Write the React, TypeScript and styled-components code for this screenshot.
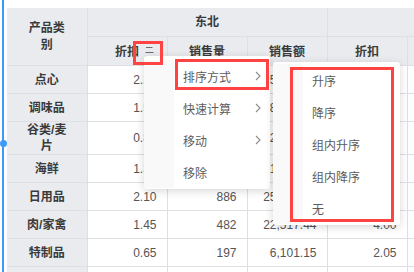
import React from "react";
import styled, { createGlobalStyle } from "styled-components";

const GlobalStyle = createGlobalStyle`
  html, body { margin: 0; padding: 0; background: #fff; }
  body { font-family: "Liberation Sans", "Noto Sans CJK SC", sans-serif; }
`;

const Page = styled.div`
  position: relative;
  display: flex;
  width: 414px;
  height: 272px;
  overflow: hidden;
  background: #fff;
`;

const Handle = styled.div`
  position: relative;
  flex: none;
  width: 7px;
  &::before {
    content: "";
    position: absolute;
    left: 2px;
    top: 0;
    bottom: 0;
    width: 2px;
    background: #3d9bf6;
  }
`;

const HandleDot = styled.span`
  position: absolute;
  left: 0;
  top: 140px;
  width: 7px;
  height: 7px;
  border-radius: 50%;
  background: #3d9bf6;
`;

const TableArea = styled.div`
  flex: 1;
  padding-top: 8px;
  overflow: hidden;
`;

const Table = styled.table`
  border-collapse: collapse;
  table-layout: fixed;
  width: 480px;
  font-size: 12px;
  color: #333;
`;

const Col = styled.col`
  width: 80px;
`;

const HeadCell = styled.th`
  height: 28px;
  padding: 0 6px;
  background: #e9ebee;
  border: 1px solid #dcdfe3;
  border-top: none;
  font-weight: 700;
  color: #3a3a3a;
  text-align: center;
  line-height: 16px;
  &:first-child { border-left: none; }
`;

const CornerCell = styled(HeadCell)`
  padding: 0 18px;
  line-height: 17px;
`;

const HeadLabel = styled.span`
  position: relative;
  display: inline-block;
  top: 1px;
`;

const SortIcon = styled.svg`
  position: absolute;
  left: calc(100% + 6px);
  top: 2px;
`;

const LabelCell = styled.td`
  height: 27px;
  padding: 0 18px;
  background: #e9ebee;
  border: 1px solid #dcdfe3;
  border-left: none;
  font-weight: 700;
  color: #3a3a3a;
  text-align: center;
  line-height: 16px;
`;

const NumCell = styled.td`
  height: 27px;
  padding: 0 10px;
  background: #fff;
  border: 1px solid #dcdfe3;
  color: #555;
  text-align: right;
  white-space: nowrap;
`;

const Menu = styled.div<{ $left: number; $top: number; $width: number; $padTop: number }>`
  position: absolute;
  left: ${(p) => p.$left}px;
  top: ${(p) => p.$top}px;
  width: ${(p) => p.$width}px;
  padding: ${(p) => p.$padTop}px 0 1px;
  background: #fff;
  border-radius: 3px;
  box-shadow: 0 2px 8px rgba(0, 0, 0, 0.16);
  font-family: "Noto Sans CJK SC", "Liberation Sans", sans-serif;
  font-size: 12px;
  color: #5c5c5c;
  overflow: hidden;
`;

const MenuItem = styled.div`
  display: flex;
  align-items: center;
  height: 32px;
`;

const IconColumn = styled.span`
  flex: none;
  align-self: stretch;
  width: 30px;
  background: #f9f9f9;
`;

const ItemLabel = styled.span`
  flex: 1;
  padding-left: 9px;
`;

const Chevron = styled.svg`
  flex: none;
  margin-right: 9px;
`;

const Callout = styled.div<{ $left: number; $top: number; $width: number; $height: number }>`
  position: absolute;
  left: ${(p) => p.$left}px;
  top: ${(p) => p.$top}px;
  width: ${(p) => p.$width}px;
  height: ${(p) => p.$height}px;
  box-sizing: border-box;
  border: 3px solid #ff4242;
  pointer-events: none;
`;

const rows: [string, string, string, string, string][] = [
  ["点心", "2.20", "1,356", "45,212.35", "3.10"],
  ["调味品", "1.50", "742", "28,102.50", "2.40"],
  ["谷类/麦片", "0.85", "615", "12,407.20", "1.25"],
  ["海鲜", "1.35", "1,034", "31,260.80", "2.70"],
  ["日用品", "2.10", "886", "25,610.10", "3.35"],
  ["肉/家禽", "1.45", "482", "22,517.44", "4.00"],
  ["特制品", "0.65", "197", "6,101.15", "2.05"],
  ["饮料", "3.05", "1,520", "60,480.00", "3.60"],
];

const ChevronRight = () => (
  <Chevron width="6" height="10" viewBox="0 0 6 10">
    <path d="M1 1l4 4-4 4" fill="none" stroke="#8c8c8c" strokeWidth="1.1" />
  </Chevron>
);

export default function App() {
  return (
    <>
      <GlobalStyle />
      <Page>
        <Handle>
          <HandleDot />
        </Handle>
        <TableArea>
          <Table>
            <colgroup>
              <Col />
              <Col />
              <Col />
              <Col />
              <Col />
              <Col />
            </colgroup>
            <thead>
              <tr>
                <CornerCell rowSpan={2}>产品类别</CornerCell>
                <HeadCell colSpan={3}>东北</HeadCell>
                <HeadCell colSpan={2}></HeadCell>
              </tr>
              <tr>
                <HeadCell>
                  <HeadLabel>
                    折扣
                    <SortIcon width="9" height="12" viewBox="0 0 9 12">
                      <path d="M1 1.5h6.5M0.5 6.5h8M0.5 11h8" stroke="#6b6b6b" strokeWidth="1.1" />
                    </SortIcon>
                  </HeadLabel>
                </HeadCell>
                <HeadCell>
                  <HeadLabel>销售量</HeadLabel>
                </HeadCell>
                <HeadCell>
                  <HeadLabel>销售额</HeadLabel>
                </HeadCell>
                <HeadCell>
                  <HeadLabel>折扣</HeadLabel>
                </HeadCell>
                <HeadCell />
              </tr>
            </thead>
            <tbody>
              {rows.map((r) => (
                <tr key={r[0]}>
                  <LabelCell>{r[0]}</LabelCell>
                  <NumCell>{r[1]}</NumCell>
                  <NumCell>{r[2]}</NumCell>
                  <NumCell>{r[3]}</NumCell>
                  <NumCell>{r[4]}</NumCell>
                  <NumCell />
                </tr>
              ))}
            </tbody>
          </Table>
        </TableArea>

        <Menu $left={144} $top={56} $width={126} $padTop={4}>
          <MenuItem>
            <IconColumn />
            <ItemLabel>排序方式</ItemLabel>
            <ChevronRight />
          </MenuItem>
          <MenuItem>
            <IconColumn />
            <ItemLabel>快速计算</ItemLabel>
            <ChevronRight />
          </MenuItem>
          <MenuItem>
            <IconColumn />
            <ItemLabel>移动</ItemLabel>
            <ChevronRight />
          </MenuItem>
          <MenuItem>
            <IconColumn />
            <ItemLabel>移除</ItemLabel>
          </MenuItem>
        </Menu>

        <Menu $left={273} $top={62} $width={127} $padTop={2}>
          {["升序", "降序", "组内升序", "组内降序", "无"].map((t) => (
            <MenuItem key={t}>
              <IconColumn />
              <ItemLabel>{t}</ItemLabel>
            </MenuItem>
          ))}
        </Menu>

        <Callout $left={133} $top={41} $width={30} $height={24} />
        <Callout $left={175} $top={59} $width={94} $height={31} />
        <Callout $left={290} $top={67} $width={104} $height={155} />
      </Page>
    </>
  );
}
